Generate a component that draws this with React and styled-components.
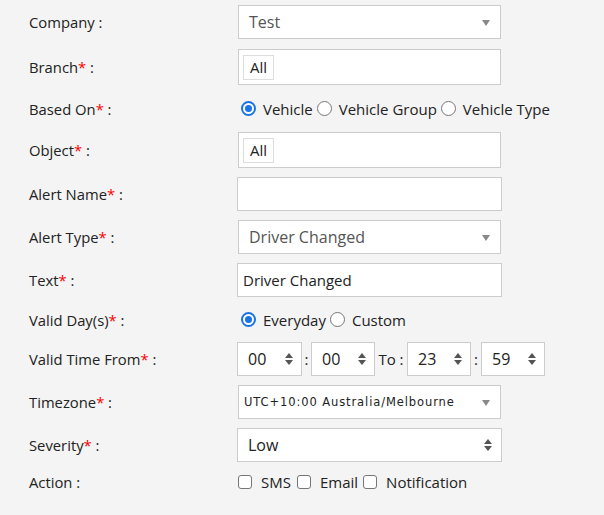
import styled, {createGlobalStyle} from 'styled-components';

const GlobalStyle = createGlobalStyle`
    html, body {
        margin: 0;
        padding: 0;
        background: #f4f4f4;
        font-family: "Open Sans", "Liberation Sans", sans-serif;
        color: #222;
    }
`

const Form = styled.div`
    width: 604px;
    height: 515px;
    padding: 5px 0 0 29px;
    box-sizing: border-box;
    display: flex;
    flex-direction: column;
    gap: 9px;
`
const Row = styled.div`
    display: flex;
    align-items: center;
    height: ${p => p.h || 34}px;
    margin-top: ${p => p.mt || 0}px;
`
const Label = styled.div`
    width: 208px;
    flex-shrink: 0;
    font-size: 14.8px;
    color: #222;
`
const Star = styled.span`
    color: #f00;
`
const Field = styled.div`
    display: flex;
    align-items: center;
    height: 100%;
`
const Select = styled.div`
    box-sizing: border-box;
    width: ${p => p.w || 263}px;
    height: ${p => p.h || 34}px;
    margin-left: ${p => p.ml ?? 1}px;
    background: #fff;
    border: 1px solid #ccc;
    display: flex;
    align-items: center;
    justify-content: space-between;
    padding: 0 9px 0 ${p => p.pl || 10}px;
    font-size: 16px;
    color: ${p => p.dark ? '#222' : '#555'};
`
const Caret = styled.span`
    width: 0;
    height: 0;
    border-left: 4.5px solid transparent;
    border-right: 4.5px solid transparent;
    border-top: 6px solid #888;
    margin: 2px 1px 0 0;
`
const Zone = styled.span`
    font-family: "DejaVu Sans", sans-serif;
    font-size: 11.5px;
    letter-spacing: 0.9px;
    color: #222;
`
const TagBox = styled.div`
    box-sizing: border-box;
    width: 263px;
    height: 36px;
    margin-left: 1px;
    background: #fff;
    border: 1px solid #ccc;
    display: flex;
    align-items: center;
    padding-left: 4px;
`
const Tag = styled.span`
    box-sizing: border-box;
    height: 25px;
    padding: 0 6px;
    border: 1px solid #ddd;
    display: flex;
    align-items: center;
    font-size: 15px;
    color: #222;
`
const Input = styled.div`
    box-sizing: border-box;
    width: 265px;
    height: ${p => p.h || 34}px;
    background: #fff;
    border: 1px solid #ccc;
    display: flex;
    align-items: center;
    padding-left: 5px;
    font-size: 15px;
    color: #222;
`
const Choice = styled.label`
    display: flex;
    align-items: center;
    font-size: 15px;
    color: #222;
    margin-right: ${p => p.mr ?? 4}px;
`
const Radio = styled.span`
    box-sizing: border-box;
    width: 15px;
    height: 15px;
    border-radius: 50%;
    margin: 0 7px 0 ${p => p.first ? 4 : 0}px;
    border: ${p => p.on ? '2px solid #1a73e8' : '1px solid #777'};
    background: #fff;
    display: flex;
    align-items: center;
    justify-content: center;
    &::after {
        content: '';
        width: 7px;
        height: 7px;
        border-radius: 50%;
        background: ${p => p.on ? '#1a73e8' : 'transparent'};
    }
`
const Check = styled.span`
    box-sizing: border-box;
    width: 14px;
    height: 14px;
    border-radius: 3px;
    border: 1px solid #767676;
    background: #fff;
    margin: 0 9px 0 1px;
`
const Spin = styled.div`
    box-sizing: border-box;
    width: ${p => p.w || 65}px;
    height: 34px;
    background: #fff;
    border: 1px solid #ccc;
    display: flex;
    align-items: center;
    justify-content: space-between;
    padding: 0 8px 0 10px;
    font-size: 16px;
    color: #222;
`
const Arrows = styled.span`
    display: flex;
    flex-direction: column;
    gap: 2px;
    &::before, &::after {
        content: '';
        width: 0;
        height: 0;
        border-left: 4px solid transparent;
        border-right: 4px solid transparent;
    }
    &::before {
        border-bottom: 5px solid #555;
    }
    &::after {
        border-top: 5px solid #555;
    }
`
const Sep = styled.span`
    width: ${p => p.w}px;
    text-align: center;
    font-size: 15px;
    color: #222;
`

function Req({children}) {
    return <Label>{children}<Star>*</Star> :</Label>
}

function App() {
    return (
        <>
            <GlobalStyle />
            <Form>
                <Row>
                    <Label>Company :</Label>
                    <Field><Select>Test<Caret /></Select></Field>
                </Row>
                <Row h={36} mt={1}>
                    <Req>Branch</Req>
                    <Field><TagBox><Tag>All</Tag></TagBox></Field>
                </Row>
                <Row h={29}>
                    <Req>Based On</Req>
                    <Field>
                        <Choice><Radio on first />Vehicle</Choice>
                        <Choice><Radio />Vehicle Group</Choice>
                        <Choice><Radio />Vehicle Type</Choice>
                    </Field>
                </Row>
                <Row h={36}>
                    <Req>Object</Req>
                    <Field><TagBox><Tag>All</Tag></TagBox></Field>
                </Row>
                <Row>
                    <Req>Alert Name</Req>
                    <Field><Input /></Field>
                </Row>
                <Row>
                    <Req>Alert Type</Req>
                    <Field><Select>Driver Changed<Caret /></Select></Field>
                </Row>
                <Row>
                    <Req>Text</Req>
                    <Field><Input>Driver Changed</Input></Field>
                </Row>
                <Row h={27}>
                    <Req>Valid Day(s)</Req>
                    <Field>
                        <Choice><Radio on first />Everyday</Choice>
                        <Choice><Radio />Custom</Choice>
                    </Field>
                </Row>
                <Row>
                    <Req>Valid Time From</Req>
                    <Field>
                        <Spin>00<Arrows /></Spin>
                        <Sep w={9}>:</Sep>
                        <Spin w={64}>00<Arrows /></Spin>
                        <Sep w={32}>To :</Sep>
                        <Spin w={64}>23<Arrows /></Spin>
                        <Sep w={10}>:</Sep>
                        <Spin w={64}>59<Arrows /></Spin>
                    </Field>
                </Row>
                <Row>
                    <Req>Timezone</Req>
                    <Field>
                        <Select pl={5}><Zone>UTC+10:00 Australia/Melbourne</Zone><Caret /></Select>
                    </Field>
                </Row>
                <Row>
                    <Req>Severity</Req>
                    <Field><Select w={265} ml={0} dark>Low<Arrows /></Select></Field>
                </Row>
                <Row h={22}>
                    <Label>Action :</Label>
                    <Field>
                        <Choice mr={5}><Check />SMS</Choice>
                        <Choice mr={4}><Check />Email</Choice>
                        <Choice><Check />Notification</Choice>
                    </Field>
                </Row>
            </Form>
        </>
    )
}

export default App
